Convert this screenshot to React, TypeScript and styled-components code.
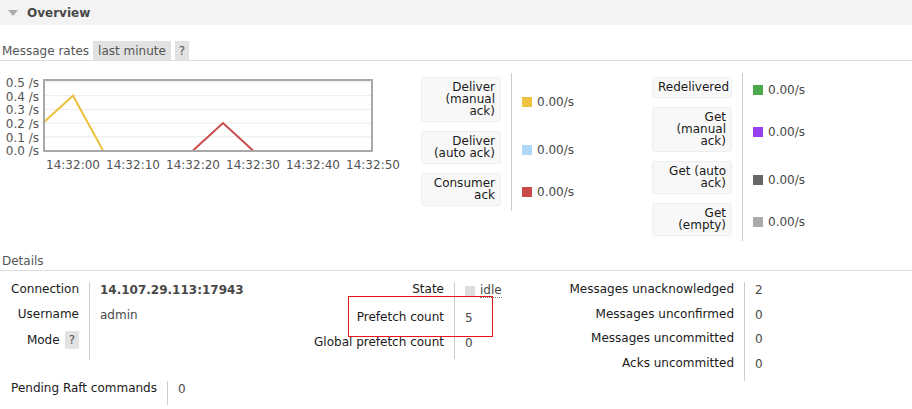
import React from 'react';
import styled, { createGlobalStyle } from 'styled-components';

const GlobalStyle = createGlobalStyle`
  body {
    margin: 0;
    background: #fff;
  }
`;

const Page = styled.div`
  position: relative;
  width: 912px;
  height: 409px;
  overflow: hidden;
  font-family: 'DejaVu Sans', Verdana, sans-serif;
  font-size: 12px;
  color: #484848;
`;

const SectionHeader = styled.h2`
  margin: 0;
  height: 25px;
  display: flex;
  align-items: center;
  gap: 9px;
  padding-left: 8px;
  background: #f3f3f3;
  font-size: 12px;
  font-weight: bold;
  color: #484848;
`;

const Caret = styled.span`
  width: 0;
  height: 0;
  border-left: 5px solid transparent;
  border-right: 5px solid transparent;
  border-top: 6px solid #aaa;
`;

const SubHeading = styled.h3<{ $top: number }>`
  margin: ${(p) => p.$top}px 0 0;
  height: 19px;
  line-height: 20px;
  padding-left: 2px;
  display: flex;
  align-items: stretch;
  gap: 4px;
  border-bottom: 1px solid #ddd;
  font-size: 12px;
  font-weight: normal;
  color: #555;
`;

const Pill = styled.span`
  padding: 0 5px;
  background: #e2e2e2;
  color: #555;
`;

const HelpPill = styled(Pill)`
  padding: 0 4px;
`;

const RatesRow = styled.div`
  display: flex;
  margin-top: 12px;
`;

const ChartWrap = styled.div`
  width: 421px;
  flex-shrink: 0;
`;

const LegendGrid = styled.div<{ $width?: number }>`
  display: grid;
  grid-template-columns: 90px auto;
  align-content: start;
  width: ${(p) => (p.$width ? `${p.$width}px` : 'auto')};
  flex-shrink: 0;
`;

const LegendLabelCell = styled.div`
  padding: 4px 10px 5px 0;
`;

const LegendBox = styled.div`
  width: 80px;
  box-sizing: border-box;
  padding: 3px 5px 4px;
  border: 1px solid #eee;
  border-radius: 3px;
  background: #f8f8f8;
  text-align: right;
  line-height: 12px;
  color: #1a1a1a;
`;

const LegendValueCell = styled.div`
  border-left: 1px solid #ccc;
  padding: 3px 0 0 10px;
  display: flex;
  align-items: center;
  gap: 5px;
`;

const Swatch = styled.span<{ $color: string }>`
  width: 10px;
  height: 10px;
  background: ${(p) => p.$color};
`;

const DetailsRow = styled.div`
  display: flex;
  margin-top: 11px;
`;

const DetailGrid = styled.div<{ $label: number; $value: number }>`
  display: grid;
  grid-template-columns: ${(p) => p.$label}px ${(p) => p.$value}px;
  align-content: start;
  flex-shrink: 0;
`;

const DLabel = styled.div<{ $extra?: number }>`
  text-align: right;
  padding: 0 10px ${(p) => 10.7 + (p.$extra || 0)}px 0;
  line-height: 14px;
  color: #1a1a1a;
  white-space: nowrap;
`;

const DValue = styled.div<{ $bold?: boolean }>`
  border-left: 1px solid #ccc;
  padding: 1px 0 0 10px;
  line-height: 14px;
  font-weight: ${(p) => (p.$bold ? 'bold' : 'normal')};
  white-space: nowrap;
`;

const MiniHelp = styled.span`
  display: inline-block;
  margin-left: 5px;
  padding: 2px 4px;
  line-height: 14px;
  background: #e2e2e2;
  color: #555;
`;

const StateValue = styled.span`
  display: inline-flex;
  align-items: center;
  gap: 5px;
`;

const StateDot = styled.span`
  width: 10px;
  height: 10px;
  background: #ddd;
`;

const Abbr = styled.abbr`
  text-decoration: none;
  border-bottom: 1px dotted #777;
`;

const Highlight = styled.div`
  position: absolute;
  left: 348px;
  top: 296px;
  width: 145px;
  height: 41px;
  box-sizing: border-box;
  border: 1px solid #e8141c;
  pointer-events: none;
`;

// chart coordinates are page-space minus the row top (73)
const Y0 = 77.5;
const PX_PER_UNIT = 137;
const yOf = (v: number) => Y0 - v * PX_PER_UNIT;
const xOf = (sec: number) => 73 + sec * 6;

const series = [
  { color: '#edc240', points: [[-5, 0.2], [0, 0.4], [5, 0]] },
  { color: '#cb4b4b', points: [[20, 0], [25, 0.2], [30, 0]] },
];

const yTicks = [0.5, 0.4, 0.3, 0.2, 0.1, 0];
const xTicks = ['14:32:00', '14:32:10', '14:32:20', '14:32:30', '14:32:40', '14:32:50'];

function RateChart() {
  return (
    <svg width={410} height={100} style={{ display: 'block' }}>
      {yTicks.slice(0, -1).map((v) => (
        <line key={v} x1={44} x2={372} y1={yOf(v)} y2={yOf(v)} stroke="#ececec" strokeWidth={1} />
      ))}
      {series.map((s) => (
        <polyline
          key={s.color}
          fill="none"
          stroke={s.color}
          strokeWidth={2}
          points={s.points.map(([t, v]) => `${xOf(t)},${yOf(v)}`).join(' ')}
        />
      ))}
      <rect x={44} y={7} width={328} height={71} fill="none" stroke="#a8a8a8" strokeWidth={2} />
      {yTicks.map((v) => (
        <text
          key={v}
          x={39}
          y={yOf(v) + 4.8}
          textAnchor="end"
          fontFamily="DejaVu Sans, sans-serif"
          fontSize={12}
          fill="#545454"
        >
          {v.toFixed(1)} /s
        </text>
      ))}
      {xTicks.map((label, i) => (
        <text
          key={label}
          x={xOf(i * 10)}
          y={95.8}
          textAnchor="middle"
          fontFamily="DejaVu Sans, sans-serif"
          fontSize={12}
          fill="#545454"
        >
          {label}
        </text>
      ))}
    </svg>
  );
}

type LegendItem = { lines: string[]; color: string; value: string };

const leftLegend: LegendItem[] = [
  { lines: ['Deliver', '(manual', 'ack)'], color: '#edc240', value: '0.00/s' },
  { lines: ['Deliver', '(auto ack)'], color: '#afd8f8', value: '0.00/s' },
  { lines: ['Consumer', 'ack'], color: '#cb4b4b', value: '0.00/s' },
];

const rightLegend: LegendItem[] = [
  { lines: ['Redelivered'], color: '#4da74d', value: '0.00/s' },
  { lines: ['Get', '(manual', 'ack)'], color: '#9440ed', value: '0.00/s' },
  { lines: ['Get (auto', 'ack)'], color: '#666666', value: '0.00/s' },
  { lines: ['Get', '(empty)'], color: '#aaaaaa', value: '0.00/s' },
];

function Legend({ items, width }: { items: LegendItem[]; width?: number }) {
  return (
    <LegendGrid $width={width}>
      {items.map((item) => (
        <React.Fragment key={item.color}>
          <LegendLabelCell>
            <LegendBox>
              {item.lines.map((l, i) => (
                <React.Fragment key={i}>
                  {i > 0 && <br />}
                  {l}
                </React.Fragment>
              ))}
            </LegendBox>
          </LegendLabelCell>
          <LegendValueCell>
            <Swatch $color={item.color} />
            {item.value}
          </LegendValueCell>
        </React.Fragment>
      ))}
    </LegendGrid>
  );
}

export default function App() {
  return (
    <Page>
      <GlobalStyle />
      <SectionHeader>
        <Caret />
        Overview
      </SectionHeader>

      <SubHeading $top={16}>
        Message rates
        <Pill>last minute</Pill>
        <HelpPill>?</HelpPill>
      </SubHeading>

      <RatesRow>
        <ChartWrap>
          <RateChart />
        </ChartWrap>
        <Legend items={leftLegend} width={231} />
        <Legend items={rightLegend} />
      </RatesRow>

      <SubHeading $top={10}>Details</SubHeading>

      <DetailsRow>
        <DetailGrid $label={89} $value={211}>
          <DLabel>Connection</DLabel>
          <DValue $bold>14.107.29.113:17943</DValue>
          <DLabel>Username</DLabel>
          <DValue>admin</DValue>
          <DLabel>
            Mode
            <MiniHelp>?</MiniHelp>
          </DLabel>
          <DValue />
        </DetailGrid>

        <DetailGrid $label={154} $value={106}>
          <DLabel $extra={3.3}>State</DLabel>
          <DValue>
            <StateValue>
              <StateDot />
              <Abbr>idle</Abbr>
            </StateValue>
          </DValue>
          <DLabel>Prefetch count</DLabel>
          <DValue>5</DValue>
          <DLabel>Global prefetch count</DLabel>
          <DValue>0</DValue>
        </DetailGrid>

        <DetailGrid $label={184} $value={168}>
          <DLabel>Messages unacknowledged</DLabel>
          <DValue>2</DValue>
          <DLabel>Messages unconfirmed</DLabel>
          <DValue>0</DValue>
          <DLabel>Messages uncommitted</DLabel>
          <DValue>0</DValue>
          <DLabel>Acks uncommitted</DLabel>
          <DValue>0</DValue>
        </DetailGrid>
      </DetailsRow>

      <DetailGrid $label={167} $value={200}>
        <DLabel>Pending Raft commands</DLabel>
        <DValue>0</DValue>
      </DetailGrid>

      <Highlight />
    </Page>
  );
}
